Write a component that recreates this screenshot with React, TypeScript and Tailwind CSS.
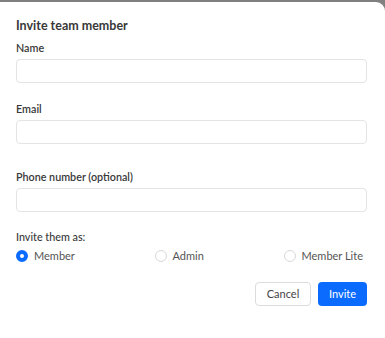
export default function App() {
  const font = { fontFamily: "Lato, 'Noto Sans', sans-serif" }
  return (
    <div className="w-[385px] h-[338px] overflow-hidden bg-[#808080]" style={font}>
      <div className="mt-[2px] -ml-[10px] w-[395px] h-[345px] bg-white rounded-[9px] pl-[26px] pr-[18px] pt-[17px] text-[#383838]">
        <h2 className="text-[12.5px] font-bold leading-[14px] text-[#383838]">Invite team member</h2>

        <label className="block mt-[8px] text-[10.75px] font-semibold leading-[13px]">Name</label>
        <input className="block mt-[5px] w-[351px] h-[24px] border border-[#e4e4e4] rounded-[4px] outline-none" />

        <label className="block mt-[19px] text-[10.75px] font-semibold leading-[13px]">Email</label>
        <input className="block mt-[5px] w-[351px] h-[24px] border border-[#e4e4e4] rounded-[4px] outline-none" />

        <label className="block mt-[26px] text-[10.75px] font-semibold leading-[13px]">Phone number (optional)</label>
        <input className="block mt-[5px] w-[351px] h-[24px] border border-[#e4e4e4] rounded-[4px] outline-none" />

        <div className="mt-[18px] text-[10.75px] font-medium leading-[13px]">Invite them as:</div>
        <div className="mt-[6px] flex items-center h-[14px] text-[11px] text-[#555] whitespace-nowrap">
          <div className="flex flex-none items-center gap-[6px] w-[138.5px]">
            <span className="w-[12px] h-[12px] rounded-full border-[4px] border-[#0b6bff] bg-white" />
            <span>Member</span>
          </div>
          <div className="flex flex-none items-center gap-[6px] w-[129px]">
            <span className="w-[12px] h-[12px] rounded-full border border-[#d8d8d8] bg-white" />
            <span>Admin</span>
          </div>
          <div className="flex flex-none items-center gap-[6px]">
            <span className="w-[12px] h-[12px] rounded-full border border-[#d8d8d8] bg-white" />
            <span>Member Lite</span>
          </div>
        </div>

        <div className="mt-[19px] flex justify-end gap-[7px] w-[351px]">
          <button className="w-[56px] h-[24px] rounded-[4px] border border-[#dcdcdc] bg-white text-[11px] text-[#444]">Cancel</button>
          <button className="w-[49px] h-[24px] rounded-[4px] bg-[#0b6bff] text-[11px] text-white">Invite</button>
        </div>
      </div>
    </div>
  )
}
